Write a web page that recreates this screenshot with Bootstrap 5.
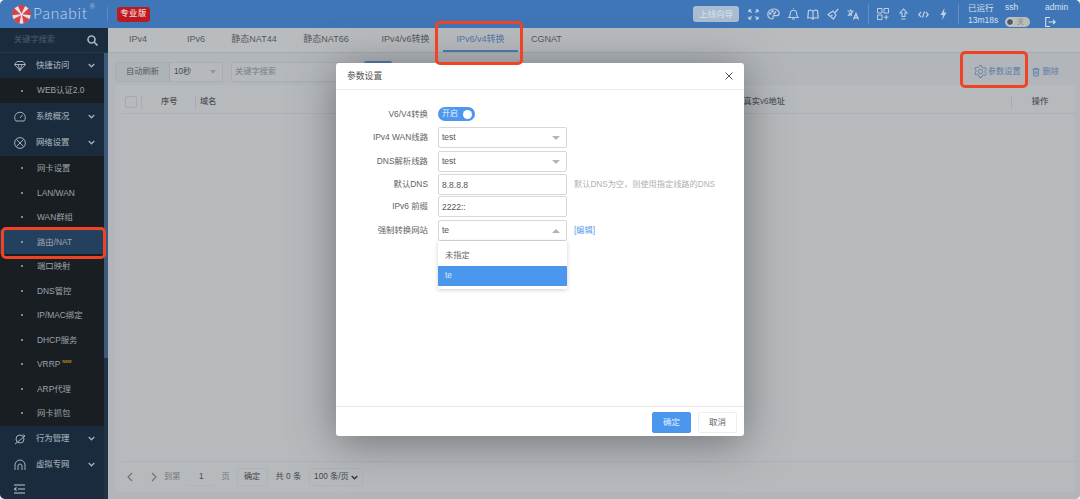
<!DOCTYPE html>
<html lang="zh-CN">
<head>
<meta charset="utf-8">
<title>Panabit</title>
<link href="https://cdn.jsdelivr.net/npm/bootstrap@5.3.0/dist/css/bootstrap.min.css" rel="stylesheet">
<style>
html,body{height:499px;overflow:hidden;background:#eef0f2}
body{width:1080px;font:8.2px/1.2 "Liberation Sans","Noto Sans CJK SC",sans-serif;color:#4f5357;position:relative}
svg{display:block;flex:none}
.pb-shell{height:499px;overflow:hidden;border-radius:5px;background:#aeb2b6}
.pb-top{height:28px;background:#3e76b8;color:#d4dfee}
.pb-logo{width:108px;padding-left:12px;border-right:1px solid #5a8bc5;height:14px}
.pb-word{font:300 15.5px/1 Lato,"Liberation Sans",sans-serif;color:#c8d7e9;margin-left:2px;letter-spacing:.75px}
.pb-reg{font-size:7px;align-self:flex-start;color:#9fbcdc;margin:-4px 0 0 2px}
.pb-edition{background:#bd1a1f;color:#e7b9b5;border-radius:3px;width:33px;height:15px;margin-left:9px;font-weight:700;letter-spacing:.6px}
.pb-guide{width:46px;height:16px;background:#a9bcd2;color:#dbe4ee;border-radius:3px;margin-right:4px;font-size:8.5px}
.pb-ic{width:20px;color:#bfcfe3}
.pb-vsep{width:1px;height:20px;background:#5f90c8;margin:0 4px 0 5px}
.pb-stat{line-height:12.5px;font-size:8.5px;color:#d6e1ef;white-space:nowrap}
.pb-w1{width:37px;margin-left:5px}.pb-w2{width:40px}.pb-w3{width:35px}
.pb-switch{width:25px;height:10px;border-radius:5px;background:#bdbdb8;margin-top:3px;padding:1px;font-size:7px;color:#8a8a85}
.pb-switch i{width:8px;height:8px;background:#4e5a66;border-radius:50%;border:1.5px solid #dcdcdc;margin-right:3px}
.pb-body{height:471px}
.pb-side{width:108px;background:#1b2b3e;color:#a4abb3}
.pb-find{height:25px;padding:0 10px 0 14px;color:#4b5c70;border-bottom:1px solid #24364b}
.pb-find svg{color:#a9b2bc}
.pb-list{width:104px;font-size:8.4px}
.pb-main-row{padding-left:14px;color:#9aa4ae;font-weight:500}
.pb-main-row svg.lead-ic{margin-right:10px;color:#a6aeb7}
.pb-main-row .pb-chev{margin-left:auto;margin-right:9px;color:#a6aeb7}
.r25{height:25px}.r26{height:26px}.r27{height:27px}.r22{height:22px}
.pb-sub{background:#191e23;color:#9ea3a8;height:24.5px;padding-left:21px}
.pb-sub-one{height:25px}
.pb-sub::before{content:"";width:2px;height:2px;border-radius:50%;background:#a9adb1;margin-right:14px}
.pb-sub.active-row{background:#24405f}
.pb-new{color:#b58a16;font-size:4px;margin:-4px 0 0 2px;font-weight:700}
.pb-rail{width:4px;background:#1f3247}
.pb-thumb{height:305px;background:#3d5a7d}
.pb-area{background:#b2b6ba;min-width:0}
.pb-tabs{height:25px;background:#b9bcbf;border-bottom:1px solid #a6abb0;padding-left:21px;color:#54585c;flex-wrap:nowrap}
.pb-tabs .nav-link{color:#54585c;padding:0;height:24px;display:flex;align-items:center;font-size:9px;justify-content:center;border-bottom:2px solid transparent}
.t1{width:18px;margin-right:40px}.t2{width:18px;margin-right:27px}.t3{width:44px;margin-right:28px}.t4{width:44px;margin-right:34px}.t5{width:47px;margin-right:14px}.t6{width:75px;margin-right:13px}
.pb-tabs .nav-link.active{background:none;color:#5279ad;border-bottom-color:#4f7bb2}
.pb-tools{height:32px;padding:8px 5px 3px 7px}
.pb-group{height:20px;border:1px solid #a9aeb3;border-radius:2px;background:#b5b9bd}
.pb-auto{width:54px;background:#aeb3b8;border-right:1px solid #a0a6ac;height:100%;color:#55595d}
.pb-sel{width:52px;padding:0 6px 0 4px;height:100%;color:#45494d}
.pb-tri{width:0;height:0;border:3.5px solid transparent;border-top:4px solid #93979b;border-bottom:0;margin-left:auto}
.pb-key{width:120px;margin-left:8px;padding-left:3px;color:#797e83}
.pb-blue{width:28px;height:21px;background:#4d7cb4;border-radius:2px;margin-left:13px}
.pb-act{color:#5d7ca8;margin-left:auto;padding-right:16px;height:20px}
.pb-gear{margin-right:1px}
.pb-trash{margin:0 3px 0 11px}
.pb-table{margin:0 5px 7px 7px;background:#b7babd;height:407px;color:#4e5256}
.pb-thead{height:29px;padding-top:6px;border-bottom:1px solid #adb1b5;margin:0 0 0 6px}
.pb-check{width:12px;height:12px;border:1px solid #a5a9ad;border-radius:2px;margin-left:4px}
.pb-th-sep{width:1px;height:13px;background:#a8acb0}
.pb-th-first{margin-left:4px}
.h-no{width:19px;margin:0 15px 0 19px;font-weight:500;white-space:nowrap}
.h-name{margin-left:4px;font-weight:500}
.h-real{margin-left:auto;margin-right:226px;font-weight:500}
.h-op{width:56px;margin-right:7px;text-align:center;font-weight:500}
.pb-spacer{flex:1}
.pb-pager{height:31px;border-top:1px solid #adb1b5;margin:0 0 0 6px;color:#74787c}
.pb-pbox{border:1px solid #afb3b7;height:18px;border-radius:1px}
.pb-dark{color:#44484c}
.pb-prev{margin-left:6px}.pb-next{margin-left:18px}
.pb-to{margin-left:7px}
.pb-num{width:26px;margin-left:8px;border-bottom:1px solid #afb3b7;line-height:17px}
.pb-pg{margin-left:7px}.pb-go{width:31px;margin-left:7px}.pb-tot{margin-left:8px}.pb-size{width:54px;margin-left:8px}
.pb-modal{position:absolute;z-index:5;left:336px;top:63px;width:408px;height:373px;background:#fff;border:0;border-radius:3px;box-shadow:0 6px 44px rgba(40,44,48,.5);color:#555;font-size:8.2px}
.pb-modal .modal-header{height:27px;padding:0 11px;border-bottom:1px solid #eee;font-size:8.8px;color:#555}
.pb-modal .modal-body{padding:0;flex:1;position:relative}
.pb-modal .modal-footer{height:30px;padding:1px 7px 0 0;border-top:1px solid #e9e9e9;gap:7px;flex-wrap:nowrap}
.pb-modal .modal-footer>*{margin:0}
.pb-form{padding-top:17px}
.pb-row{display:flex;align-items:center}
.s6{margin-bottom:6px}.s3{margin-bottom:3px}.s2{margin-bottom:2px}.s1{margin-bottom:1px}
.pb-h14{height:14px}
.pb-lab{width:92px;text-align:right;color:#626262;margin-right:10px;white-space:nowrap;font-size:8.4px}
.pb-ctl{width:129px;height:21px;min-height:0;border:1px solid #d8d8d8;border-radius:2px;padding:0 3px;font-size:8.5px;color:#555;display:flex;align-items:center;background:#fff;box-shadow:none}
.pb-ctl .pb-tri{border-top-color:#b4b4b4;margin-right:3px;border-width:4px 4px 0}
.pb-ctl .pb-tri.up{border-top:0;border-bottom:4px solid #b4b4b4;border-left:4px solid transparent;border-right:4px solid transparent}
.pb-on{width:37px;height:14px;border-radius:7px;background:#4d97ee;color:#e9f2fc;padding:0 2px 0 4px;font-size:8px}
.pb-on i{width:9px;height:9px;border-radius:50%;background:#fff;margin-left:auto;margin-right:1.5px}
.pb-hint{color:#b0b0b0;margin-left:7px;white-space:nowrap}
.pb-link{color:#5b9bec;margin-left:7px;text-decoration:none}
.pb-drop{position:absolute;left:102px;top:151px;width:129px;height:48px;background:#fff;box-shadow:0 1px 4px rgba(0,0,0,.2);border-radius:1px;padding-top:4px;color:#666}
.pb-drop div{height:20px;padding-left:7px;display:flex;align-items:center}
.pb-drop .picked{height:20px;background:#4b97ee;color:#dcebfb}
.pb-drop .first{height:21px}
.pb-ok,.pb-no{width:39px;height:21px;padding:0;font-size:8.5px;border-radius:2px;line-height:1}
.pb-ok{background:#4b97ee;border:1px solid #4b97ee;color:#dfeeff}
.pb-no{background:#fff;border:1px solid #eee;color:#666}
.pb-mark{position:absolute;z-index:6;border:3px solid #ee4324;border-radius:5px;pointer-events:none}
.m1{left:1px;top:227px;width:105px;height:32px}
.m2{left:435px;top:21px;width:88px;height:44px}
.m3{left:960px;top:51px;width:68px;height:37px}
</style>
</head>
<body>
<div class="pb-shell">
<header class="pb-top d-flex align-items-center">
  <div class="pb-logo d-flex align-items-center flex-none">
    <svg width="19" height="19" viewBox="0 0 38 38"><circle cx="19" cy="19" r="18.500" fill="#eadfdf"/><g fill="#d6404b"><path id="w" d="M19 17 11.500 1.500a18.500 18.500 0 0 1 15 0Z"/><path d="M19 17 11.500 1.500a18.500 18.500 0 0 1 15 0Z" transform="rotate(72 19 19)"/><path d="M19 17 11.500 1.500a18.500 18.500 0 0 1 15 0Z" transform="rotate(144 19 19)"/><path d="M19 17 11.500 1.500a18.500 18.500 0 0 1 15 0Z" transform="rotate(216 19 19)"/><path d="M19 17 11.500 1.500a18.500 18.500 0 0 1 15 0Z" transform="rotate(288 19 19)"/></g></svg>
    <span class="pb-word">Panabit</span><span class="pb-reg">®</span>
  </div>
  <div class="pb-edition d-flex align-items-center justify-content-center">专业版</div>
  <div class="ms-auto d-flex align-items-center">
    <div class="pb-guide d-flex align-items-center justify-content-center">上线向导</div>
    <div class="pb-ic"><svg class="mx-auto" width="11" height="11" viewBox="0 0 12 12" fill="none" stroke="currentColor" stroke-width="1.400"><path d="M1 1l3 3M1 1v2.500M1 1h2.500M11 1 8 4M11 1v2.500M11 1H8.500M1 11l3-3M1 11V8.500M1 11h2.500M11 11 8 8M11 11V8.500M11 11H8.500"/></svg></div>
    <div class="pb-ic"><svg class="mx-auto" width="13" height="12" viewBox="0 0 13 12" fill="none" stroke="currentColor" stroke-width="1.200"><path d="M6.500 1C3 1 .8 3.500.8 6.500c0 2.500 2 4.500 4.200 4.500 1.300 0 1.300-1 1-1.800-.3-.9.2-1.500 1.200-1.500h2.600c1.500 0 2.400-1 2.400-2.400C12.200 2.800 9.800 1 6.500 1Z"/><path d="M6.500 6.500 9 3.500" stroke-width="1.500"/><circle cx="3.300" cy="5.500" r=".7" fill="currentColor"/><circle cx="5.500" cy="3.300" r=".7" fill="currentColor"/></svg></div>
    <div class="pb-ic"><svg class="mx-auto" width="11" height="12" viewBox="0 0 11 12" fill="none" stroke="currentColor" stroke-width="1.100"><path d="M.8 9.500h9.400c-1-1-1.500-1.800-1.500-4a3.200 3.200 0 0 0-6.400 0c0 2.200-.5 3-1.500 4ZM4 11h3M5.500 1V.3"/></svg></div>
    <div class="pb-ic"><svg class="mx-auto" width="12" height="11" viewBox="0 0 12 11" fill="none" stroke="currentColor" stroke-width="1.200"><path d="M6 2.500C5 1.300 3 1 1.500 1.500L.8 9C3 8.500 5 8.800 6 10c1-1.200 3-1.500 5.200-1l-.7-7.500C9 1 7 1.300 6 2.500ZM6 2.500V10"/></svg></div>
    <div class="pb-ic"><svg class="mx-auto" width="12" height="12" viewBox="0 0 12 12" fill="none" stroke="currentColor" stroke-width="1.200"><path d="M1 6.500 6 3l3 4-2.500 4L1 6.500ZM8 4.500l3.200-3.500M3.500 8.500l2-1.500"/></svg></div>
    <div class="pb-ic"><svg class="mx-auto" width="12" height="11" viewBox="0 0 12 11" fill="none" stroke="currentColor" stroke-width="1.200"><path d="M.5 2h6M3.500.5V2M5.500 2C5 4 3 6 .8 6.800M2 3.500c.8 1.500 2 2.700 3 3.200"/><path d="M6.500 10.500 9 4.500l2.500 6M7.300 8.700h3.400" stroke-width="1.400"/></svg></div>
    <div class="pb-vsep"></div>
    <div class="pb-ic"><svg class="mx-auto" width="12" height="12" viewBox="0 0 12 12" fill="none" stroke="currentColor" stroke-width="1"><path d="M.5.500h4.500v4.500H.5zM7 .5h4.500v4.500H7zM.5 7h4.500v4.500H.5zM9.200 7v4.500M7 9.200h4.500"/></svg></div>
    <div class="pb-ic"><svg class="mx-auto" width="9" height="12" viewBox="0 0 9 12" fill="none" stroke="currentColor" stroke-width="1.100"><path d="M4.500 1 8 5H6v3.500H3V5H1ZM2.500 11h4"/></svg></div>
    <div class="pb-ic"><svg class="mx-auto" width="11" height="9" viewBox="0 0 11 9" fill="none" stroke="currentColor" stroke-width="1.200"><path d="M3 2 .8 4.500 3 7M8 2l2.200 2.500L8 7M6.500 1.500l-2 6"/></svg></div>
    <div class="pb-ic"><svg class="mx-auto" width="7" height="12" viewBox="0 0 7 12" fill="currentColor"><path d="M4.500 0 .5 7H3l-.8 5L6.500 4.500H4Z"/></svg></div>
    <div class="pb-vsep"></div>
    <div class="pb-stat pb-w1">已运行<br>13m18s</div>
    <div class="pb-stat pb-w2">ssh<div class="pb-switch d-flex align-items-center"><i class="d-block"></i>关</div></div>
    <div class="pb-stat pb-w3">admin<svg class="mt-1" width="11" height="10" viewBox="0 0 11 10" fill="none" stroke="currentColor" stroke-width="1.100"><path d="M5 .5H.7v9H5M3.500 5h7M8 2.800 10.200 5 8 7.200"/></svg></div>
  </div>
</header>
<div class="pb-body d-flex">
  <aside class="pb-side flex-none">
    <div class="pb-find d-flex align-items-center justify-content-between"><span>关键字搜索</span><svg width="11" height="11" viewBox="0 0 11 11" fill="none" stroke="currentColor" stroke-width="1.700"><circle cx="4.500" cy="4.500" r="3.500"/><path d="M7 7l3.500 3.500"/></svg></div>
    <div class="d-flex">
      <nav class="pb-list">
        <div class="pb-main-row r25 d-flex align-items-center"><svg class="lead-ic" width="12" height="10" viewBox="0 0 12 10" fill="none" stroke="currentColor"><path d="M3 .5h6L11.500 3.500 6 9.500.5 3.500ZM.5 3.500h11M4 3.500 6 9.500l2-6"/></svg>快捷访问<svg class="pb-chev" width="7" height="5" viewBox="0 0 7 5" fill="none" stroke="currentColor" stroke-width="1.300"><path d="M.7 1 3.500 3.800 6.300 1"/></svg></div>
        <div class="pb-sub pb-sub-one d-flex align-items-center">WEB认证2.0</div>
        <div class="pb-main-row r26 d-flex align-items-center"><svg class="lead-ic" width="12" height="11" viewBox="0 0 12 11" fill="none" stroke="currentColor"><path d="M2 10a5.300 5.300 0 1 1 8 0ZM6 7l2.500-3"/></svg>系统概况<svg class="pb-chev" width="7" height="5" viewBox="0 0 7 5" fill="none" stroke="currentColor" stroke-width="1.300"><path d="M.7 1 3.500 3.800 6.300 1"/></svg></div>
        <div class="pb-main-row r27 d-flex align-items-center"><svg class="lead-ic" width="12" height="12" viewBox="0 0 12 12" fill="none" stroke="currentColor"><circle cx="6" cy="6" r="5.400"/><path d="M2.300 2.300l7.400 7.400M9.700 2.300l-7.400 7.400"/></svg>网络设置<svg class="pb-chev" width="7" height="5" viewBox="0 0 7 5" fill="none" stroke="currentColor" stroke-width="1.300"><path d="M.7 1 3.500 3.800 6.300 1"/></svg></div>
        <div class="pb-sub d-flex align-items-center">网卡设置</div>
        <div class="pb-sub d-flex align-items-center">LAN/WAN</div>
        <div class="pb-sub d-flex align-items-center">WAN群组</div>
        <div class="pb-sub active-row d-flex align-items-center">路由/NAT</div>
        <div class="pb-sub d-flex align-items-center">端口映射</div>
        <div class="pb-sub d-flex align-items-center">DNS管控</div>
        <div class="pb-sub d-flex align-items-center">IP/MAC绑定</div>
        <div class="pb-sub d-flex align-items-center">DHCP服务</div>
        <div class="pb-sub d-flex align-items-center">VRRP<span class="pb-new">NEW</span></div>
        <div class="pb-sub d-flex align-items-center">ARP代理</div>
        <div class="pb-sub d-flex align-items-center">网卡抓包</div>
        <div class="pb-main-row r26 d-flex align-items-center"><svg class="lead-ic" width="12" height="12" viewBox="0 0 12 12" fill="none" stroke="currentColor"><circle cx="6" cy="6" r="4"/><path d="M1 11 11 3M9 1.500l2 1.500"/></svg>行为管理<svg class="pb-chev" width="7" height="5" viewBox="0 0 7 5" fill="none" stroke="currentColor" stroke-width="1.300"><path d="M.7 1 3.500 3.800 6.300 1"/></svg></div>
        <div class="pb-main-row r26 d-flex align-items-center"><svg class="lead-ic" width="12" height="12" viewBox="0 0 12 12" fill="none" stroke="currentColor"><path d="M1 11V6a5 5 0 0 1 10 0v5M4 11V7a2 2 0 0 1 4 0v4"/></svg>虚拟专网<svg class="pb-chev" width="7" height="5" viewBox="0 0 7 5" fill="none" stroke="currentColor" stroke-width="1.300"><path d="M.7 1 3.500 3.800 6.300 1"/></svg></div>
        <div class="pb-main-row r22 d-flex align-items-center"><svg class="lead-ic" width="11" height="10" viewBox="0 0 11 10" fill="none" stroke="#c3c9d0" stroke-width="1.200"><path d="M0 1h11M4 5h7M0 9h11M2.500 3.500 .5 5l2 1.500"/></svg></div>
      </nav>
      <div class="pb-rail"><div class="pb-thumb"></div></div>
    </div>
  </aside>
  <main class="pb-area flex-grow-1 d-flex flex-column">
    <ul class="nav pb-tabs align-items-center">
      <li class="nav-item t1"><a class="nav-link">IPv4</a></li>
      <li class="nav-item t2"><a class="nav-link">IPv6</a></li>
      <li class="nav-item t3"><a class="nav-link text-nowrap">静态NAT44</a></li>
      <li class="nav-item t4"><a class="nav-link text-nowrap">静态NAT66</a></li>
      <li class="nav-item t5"><a class="nav-link text-nowrap">IPv4/v6转换</a></li>
      <li class="nav-item t6"><a class="nav-link active text-nowrap">IPv6/v4转换</a></li>
      <li class="nav-item"><a class="nav-link">CGNAT</a></li>
    </ul>
    <div class="pb-tools d-flex align-items-center">
      <div class="pb-group d-flex align-items-center"><div class="pb-auto d-flex align-items-center justify-content-center">自动刷新</div><div class="pb-sel d-flex align-items-center">10秒<span class="pb-tri"></span></div></div>
      <div class="pb-group pb-key d-flex align-items-center">关键字搜索</div>
      <div class="pb-blue"></div>
      <div class="pb-act d-flex align-items-center">
        <svg class="pb-gear" width="13" height="13" viewBox="0 0 13 13" fill="none" stroke="currentColor" stroke-width=".9"><circle cx="6.500" cy="6.500" r="2.200"/><path d="M5.400.8h2.200l.4 1.700 1.500.9 1.700-.5 1.100 1.900-1.300 1.200v1.800l1.300 1.200-1.100 1.900-1.700-.5-1.500.9-.4 1.700H5.400L5 10.800l-1.500-.9-1.700.5L.7 8.500 2 7.300V5.500L.7 4.300l1.100-1.900 1.700.5L5 2Z" transform="translate(0 -.2) scale(1 .98)"/></svg>
        <span>参数设置</span>
        <svg class="pb-trash" width="8" height="10" viewBox="0 0 9 10" fill="none" stroke="currentColor"><path d="M.5 2h8M3 2V.7h3V2M1.500 2l.6 7.500h4.800l.6-7.500M3.500 4v3.500M5.500 4v3.500"/></svg>
        <span>删除</span>
      </div>
    </div>
    <section class="pb-table d-flex flex-column">
      <div class="pb-thead d-flex align-items-center">
        <div class="pb-check"></div>
        <div class="pb-th-sep pb-th-first"></div>
        <div class="h-no">序号</div>
        <div class="pb-th-sep"></div>
        <div class="h-name">域名</div>
        <div class="h-real">真实v6地址</div>
        <div class="pb-th-sep"></div>
        <div class="h-op">操作</div>
      </div>
      <div class="pb-spacer"></div>
      <div class="pb-pager d-flex align-items-center">
        <svg class="pb-prev" width="6" height="10" viewBox="0 0 6 10" fill="none" stroke="#6c7074" stroke-width="1.100"><path d="M5 1 1 5l4 4"/></svg>
        <svg class="pb-next" width="6" height="10" viewBox="0 0 6 10" fill="none" stroke="#6c7074" stroke-width="1.100"><path d="M1 1l4 4-4 4"/></svg>
        <span class="pb-to text-nowrap">到第</span>
        <span class="pb-num pb-dark text-center">1</span>
        <span class="pb-pg">页</span>
        <span class="pb-pbox pb-go pb-dark d-flex align-items-center justify-content-center">确定</span>
        <span class="pb-tot text-nowrap pb-dark">共 0 条</span>
        <span class="pb-pbox pb-size pb-dark d-flex align-items-center justify-content-between px-1">100 条/页<svg width="7" height="5" viewBox="0 0 7 5" fill="none" stroke="#34383c" stroke-width="1.500"><path d="M.7 1 3.500 3.800 6.300 1"/></svg></span>
      </div>
    </section>
  </main>
</div>
</div>

<div class="modal-content pb-modal">
  <div class="modal-header d-flex justify-content-between align-items-center"><span>参数设置</span><svg width="8" height="8" viewBox="0 0 8 8" fill="none" stroke="#555" stroke-width="1"><path d="M.5.500l7 7M7.500.500l-7 7"/></svg></div>
  <div class="modal-body">
    <div class="pb-form d-flex flex-column">
      <div class="pb-row pb-h14 s6"><div class="pb-lab">V6/V4转换</div><div class="pb-on d-flex align-items-center">开启<i class="d-block"></i></div></div>
      <div class="pb-row s3"><div class="pb-lab">IPv4 WAN线路</div><div class="pb-ctl">test<span class="pb-tri"></span></div></div>
      <div class="pb-row s2"><div class="pb-lab">DNS解析线路</div><div class="pb-ctl">test<span class="pb-tri"></span></div></div>
      <div class="pb-row s1"><div class="pb-lab">默认DNS</div><input class="form-control pb-ctl" value="8.8.8.8"><span class="pb-hint">默认DNS为空，则使用指定线路的DNS</span></div>
      <div class="pb-row s3"><div class="pb-lab">IPv6 前缀</div><input class="form-control pb-ctl" value="2222::"></div>
      <div class="pb-row"><div class="pb-lab">强制转换网站</div><div class="pb-ctl">te<span class="pb-tri up"></span></div><a class="pb-link">[编辑]</a></div>
    </div>
    <div class="pb-drop"><div class="first">未指定</div><div class="picked">te</div></div>
  </div>
  <div class="modal-footer"><button type="button" class="btn pb-ok">确定</button><button type="button" class="btn pb-no">取消</button></div>
</div>
<div class="pb-mark m1"></div>
<div class="pb-mark m2"></div>
<div class="pb-mark m3"></div>
<script src="https://cdn.jsdelivr.net/npm/bootstrap@5.3.0/dist/js/bootstrap.bundle.min.js"></script>
</body>
</html>
